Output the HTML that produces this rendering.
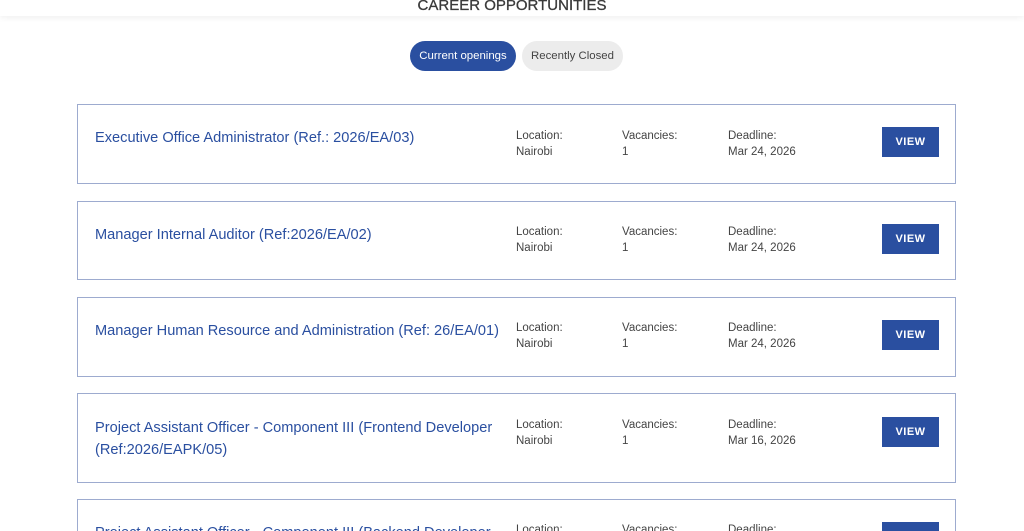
<!DOCTYPE html>
<html><head><meta charset="utf-8"><style>
*{margin:0;padding:0;box-sizing:border-box}
html,body{width:1024px;height:531px;overflow:hidden}
body{background:#fff;font-family:"Liberation Sans",sans-serif;position:relative}
.top{position:absolute;left:0;top:0;width:1024px;height:16px;background:#fff;box-shadow:0 2px 6px rgba(0,0,0,.06)}
h1{position:absolute;left:0;width:1024px;text-align:center;top:-3px;font-size:15px;font-weight:normal;color:#3a3a3a;-webkit-text-stroke:.3px #3a3a3a}
.tab{position:absolute;top:41px;height:30px;border-radius:15px;font-size:11.4px;line-height:30px;text-align:center}
.card{position:absolute;left:77px;width:879px;border:1px solid #9dabcf;background:#fff;overflow:hidden}
.t{position:absolute;left:17px;font-size:14.6px;color:#2a4fa0;line-height:22px;width:410px}
.c{position:absolute;font-size:11.5px;color:#444;line-height:16px}
.btn{position:absolute;left:804px;width:57px;height:30px;background:#2a4fa0;color:#fff;font-size:11px;font-weight:bold;text-align:center;line-height:30px;letter-spacing:.5px}
</style></head><body>
<div class="top"></div>
<h1>CAREER OPPORTUNITIES</h1>
<div class="tab" style="left:410px;width:106px;background:#2a4fa0;color:#fff">Current openings</div>
<div class="tab" style="left:522px;width:101px;background:#ececec;color:#444">Recently Closed</div>

<div class="card" style="top:104px;height:80px">
<div class="t" style="top:22px">Executive Office Administrator (Ref.: 2026/EA/03)</div>
<div class="c" style="left:438px;top:23px">Location:<br>Nairobi</div>
<div class="c" style="left:544px;top:23px">Vacancies:<br>1</div>
<div class="c" style="left:650px;top:23px">Deadline:<br>Mar 24, 2026</div>
<div class="btn" style="top:22px">VIEW</div></div>

<div class="card" style="top:201px;height:79px">
<div class="t" style="top:22px">Manager Internal Auditor (Ref:2026/EA/02)</div>
<div class="c" style="left:438px;top:22px">Location:<br>Nairobi</div>
<div class="c" style="left:544px;top:22px">Vacancies:<br>1</div>
<div class="c" style="left:650px;top:22px">Deadline:<br>Mar 24, 2026</div>
<div class="btn" style="top:22px">VIEW</div></div>

<div class="card" style="top:297px;height:80px">
<div class="t" style="top:22px;width:420px">Manager Human Resource and Administration (Ref: 26/EA/01)</div>
<div class="c" style="left:438px;top:22px">Location:<br>Nairobi</div>
<div class="c" style="left:544px;top:22px">Vacancies:<br>1</div>
<div class="c" style="left:650px;top:22px">Deadline:<br>Mar 24, 2026</div>
<div class="btn" style="top:22px">VIEW</div></div>

<div class="card" style="top:393px;height:90px">
<div class="t" style="top:23px">Project Assistant Officer - Component III (Frontend Developer (Ref:2026/EAPK/05)</div>
<div class="c" style="left:438px;top:23px">Location:<br>Nairobi</div>
<div class="c" style="left:544px;top:23px">Vacancies:<br>1</div>
<div class="c" style="left:650px;top:23px">Deadline:<br>Mar 16, 2026</div>
<div class="btn" style="top:23px">VIEW</div></div>

<div class="card" style="top:499px;height:32px;border-bottom:none">
<div class="t" style="top:22px">Project Assistant Officer - Component III (Backend Developer</div>
<div class="c" style="left:438px;top:22px">Location:<br>Nairobi</div>
<div class="c" style="left:544px;top:22px">Vacancies:<br>1</div>
<div class="c" style="left:650px;top:22px">Deadline:<br>Mar 16, 2026</div>
<div class="btn" style="top:22px">VIEW</div></div>
</body></html>
